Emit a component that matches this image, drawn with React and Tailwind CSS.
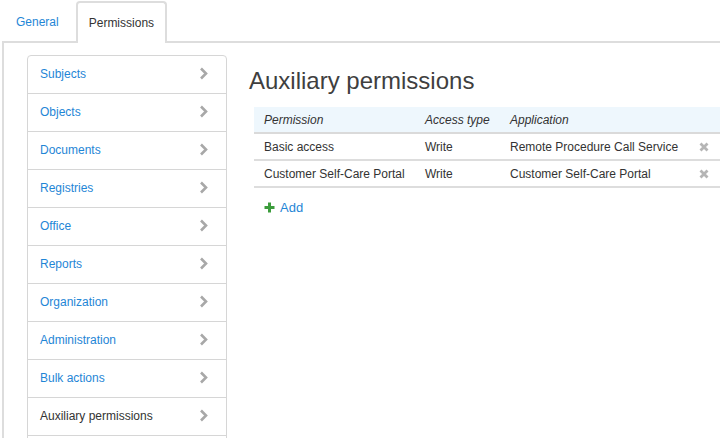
import React from "react";

const sections = [
  "Subjects",
  "Objects",
  "Documents",
  "Registries",
  "Office",
  "Reports",
  "Organization",
  "Administration",
  "Bulk actions",
  "Auxiliary permissions",
];

const permissions = [
  { name: "Basic access", access: "Write", app: "Remote Procedure Call Service" },
  { name: "Customer Self-Care Portal", access: "Write", app: "Customer Self-Care Portal" },
];

const Chevron = () => (
  <svg width="9" height="13" viewBox="0 0 9 13" className="shrink-0">
    <polyline points="2,1.5 7,6.5 2,11.5" fill="none" stroke="#a8a8a8" strokeWidth="2.6" />
  </svg>
);

const RemoveIcon = () => (
  <svg width="10" height="10" viewBox="0 0 10 10">
    <path d="M1.5 1.5 L8.5 8.5 M8.5 1.5 L1.5 8.5" stroke="#b5b5b5" strokeWidth="2.8" />
  </svg>
);

const PlusIcon = () => (
  <svg width="11" height="11" viewBox="0 0 11 11">
    <path d="M5.5 0.5 V10.5 M0.5 5.5 H10.5" stroke="#3c9c3c" strokeWidth="3" />
  </svg>
);

export default function App() {
  const active = "Auxiliary permissions";

  return (
    <div className="w-[720px] h-[438px] overflow-hidden bg-white font-['Liberation_Sans',Arial,sans-serif] text-[12px] text-[#333]">
      {/* tabs */}
      <div className="ml-[2px] flex h-[43px] items-end border-b-2 border-[#dddddd]">
        <div className="flex h-[40px] items-center px-[14px] pt-[1px] text-[#1f86d6]">General</div>
        <div className="-mb-[2px] ml-[3px] flex h-[42px] items-center rounded-t-[4px] border-2 border-b-0 border-[#dddddd] bg-white px-[11px] pb-[1px]">
          Permissions
        </div>
      </div>

      <div className="ml-[2px] flex h-[400px] border-l-2 border-[#dddddd] pl-[23px] pt-[12px]">
        {/* section list */}
        <ul className="w-[200px] shrink-0 self-start divide-y divide-[#d6d6d6] rounded-t-[4px] border border-[#d6d6d6]">
          {sections.map((s) => (
            <li
              key={s}
              className={`flex h-[38px] items-center justify-between pb-[2px] pl-[12px] pr-[18px] ${
                s === active ? "text-[#333]" : "text-[#1f86d6]"
              }`}
            >
              <span>{s}</span>
              <Chevron />
            </li>
          ))}
          <li className="h-[38px]"></li>
        </ul>

        {/* auxiliary permissions */}
        <div className="pl-[22px]">
          <h1 className="mt-[12px] h-[28px] text-[24px] leading-[28px] font-normal text-[#3f3f3f]">
            Auxiliary permissions
          </h1>
          <table className="ml-[5px] mt-[12px] w-[480px] border-collapse">
            <thead>
              <tr className="h-[26px] bg-[#eef7fd] border-b-2 border-[#dadada] text-left italic">
                <th className="w-[161px] pl-[10px] font-normal">Permission</th>
                <th className="w-[85px] pl-[10px] font-normal">Access type</th>
                <th className="w-[190px] pl-[10px] font-normal">Application</th>
                <th className="font-normal"></th>
              </tr>
            </thead>
            <tbody>
              {permissions.map((p) => (
                <tr key={p.name} className="h-[27px] border-b-2 border-[#dddddd]">
                  <td className="pl-[10px]">{p.name}</td>
                  <td className="pl-[10px]">{p.access}</td>
                  <td className="pl-[10px]">{p.app}</td>
                  <td className="pl-[9px]">
                    <RemoveIcon />
                  </td>
                </tr>
              ))}
            </tbody>
          </table>
          <div className="ml-[15px] mt-[10px] flex items-center gap-[5px] text-[#1f86d6] text-[13px]">
            <PlusIcon />
            <span>Add</span>
          </div>
        </div>
      </div>
    </div>
  );
}
